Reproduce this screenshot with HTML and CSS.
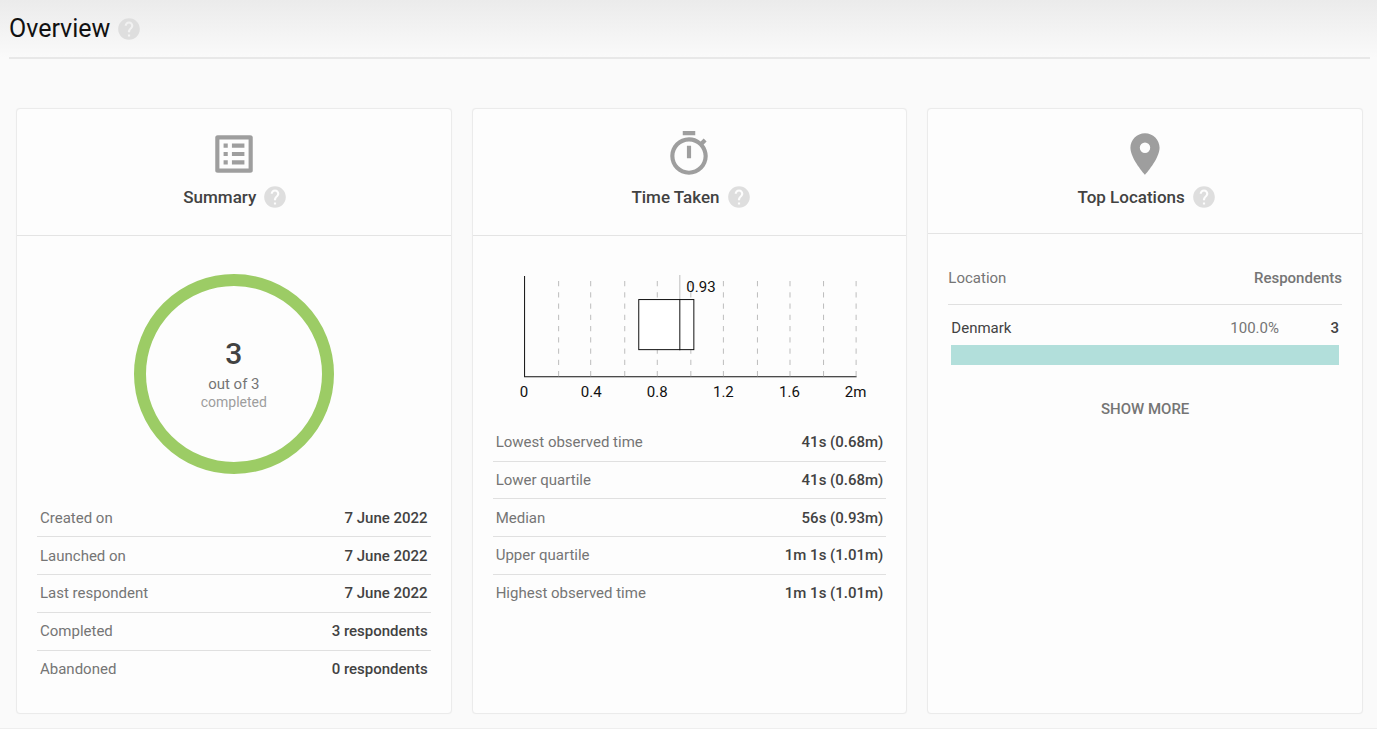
FILE: index.html
```html
<!DOCTYPE html>
<html lang="en">
<head>
<meta charset="utf-8">
<title>Overview</title>
<link rel="stylesheet" href="styles.css">
</head>
<body>
<svg class="defs" aria-hidden="true">
  <symbol id="help" viewBox="0 0 24 24"><path d="M12 2C6.48 2 2 6.48 2 12s4.48 10 10 10 10-4.480 10-10S17.520 2 12 2zm1 17h-2v-2h2v2zm2.070-7.750l-.9.920C13.450 12.900 13 13.500 13 15h-2v-.5c0-1.100.45-2.100 1.170-2.830l1.240-1.260c.37-.36.59-.86.59-1.410 0-1.100-.9-2-2-2s-2 .9-2 2H8c0-2.210 1.790-4 4-4s4 1.790 4 4c0 .88-.36 1.680-.93 2.250z"/></symbol>
</svg>
<main class="overview">
  <header class="page-head">
    <h1 class="page-title">Overview</h1>
    <button class="help" type="button" aria-label="Help: Overview"><svg class="help-icon"><use href="#help"/></svg></button>
  </header>
  <div class="cards">
    <section class="card">
      <header class="card-head">
        <svg class="card-icon" viewBox="0 0 24 24"><path d="M19 5v14H5V5h14m0-2H5c-1 0-2 0-2 1v16c0 1 1 1 2 1h14c1 0 2 0 2-1V4c0-1-1-1-2-1zM11 7h6v2h-6zm0 4h6v2h-6zm0 4h6v2h-6zM7 7h2v2H7zm0 4h2v2H7zm0 4h2v2H7z"/></svg>
        <div class="card-title"><h2>Summary</h2><button class="help" type="button" aria-label="Help: Summary"><svg class="help-icon"><use href="#help"/></svg></button></div>
      </header>
      <div class="card-body">
        <div class="donut">
          <strong class="donut-value">3</strong>
          <span class="donut-total">out of 3</span>
          <span class="donut-label">completed</span>
        </div>
        <table class="facts">
          <tr><th scope="row">Created on</th><td>7 June 2022</td></tr>
          <tr><th scope="row">Launched on</th><td>7 June 2022</td></tr>
          <tr><th scope="row">Last respondent</th><td>7 June 2022</td></tr>
          <tr><th scope="row">Completed</th><td>3 respondents</td></tr>
          <tr><th scope="row">Abandoned</th><td>0 respondents</td></tr>
        </table>
      </div>
    </section>
    <section class="card">
      <header class="card-head">
        <svg class="card-icon" viewBox="0 0 24 24"><path d="M15 1H9v2h6V1zm-4 13h2V8h-2v6zm8.030-6.610l1.420-1.420c-.43-.51-.9-.99-1.410-1.410l-1.420 1.420C16.070 4.740 14.120 4 12 4c-4.970 0-9 4.030-9 9s4.020 9 9 9 9-4.030 9-9c0-2.120-.74-4.070-1.970-5.610zM12 20c-3.870 0-7-3.130-7-7s3.130-7 7-7 7 3.130 7 7-3.130 7-7 7z"/></svg>
        <div class="card-title"><h2>Time Taken</h2><button class="help" type="button" aria-label="Help: Time Taken"><svg class="help-icon"><use href="#help"/></svg></button></div>
      </header>
      <div class="card-body">
        <svg class="boxplot" viewBox="0 0 393 136" role="img" aria-label="Box plot of time taken in minutes">
          <path class="axis" d="M31.500 10V110.500H363"/>
          <g class="grid">
            <path pathLength="93" d="M65.500 15V110"/><path pathLength="93" d="M97.500 15V110"/>
            <path pathLength="93" d="M131.500 15V110"/><path pathLength="93" d="M164 15V110"/>
            <path pathLength="93" d="M197.500 15V110"/><path pathLength="93" d="M230 15V110"/>
            <path pathLength="93" d="M264 15V110"/><path pathLength="93" d="M296.500 15V110"/>
            <path pathLength="93" d="M330 15V110"/><path pathLength="93" d="M362.500 15V110"/>
          </g>
          <rect class="box" x="145.500" y="33.500" width="55" height="50"/>
          <path class="whisker" d="M186.500 9V33"/>
          <path class="median" d="M186.500 33V84"/>
          <text x="193" y="26">0.93</text>
          <g class="ticks">
            <text x="31" y="131">0</text><text x="98" y="131">0.4</text><text x="164" y="131">0.8</text>
            <text x="230" y="131">1.2</text><text x="296" y="131">1.6</text><text x="362" y="131">2m</text>
          </g>
        </svg>
        <table class="facts">
          <tr><th scope="row">Lowest observed time</th><td>41s (0.68m)</td></tr>
          <tr><th scope="row">Lower quartile</th><td>41s (0.68m)</td></tr>
          <tr><th scope="row">Median</th><td>56s (0.93m)</td></tr>
          <tr><th scope="row">Upper quartile</th><td>1m 1s (1.01m)</td></tr>
          <tr><th scope="row">Highest observed time</th><td>1m 1s (1.01m)</td></tr>
        </table>
      </div>
    </section>
    <section class="card">
      <header class="card-head card-head-short">
        <svg class="card-icon" viewBox="0 0 24 24"><path d="M12 2C8.130 2 5 5.130 5 9c0 5.250 7 13 7 13s7-7.750 7-13c0-3.870-3.130-7-7-7zm0 9.500a2.500 2.500 0 0 1 0-5 2.500 2.500 0 0 1 0 5z"/></svg>
        <div class="card-title"><h2>Top Locations</h2><button class="help" type="button" aria-label="Help: Top Locations"><svg class="help-icon"><use href="#help"/></svg></button></div>
      </header>
      <div class="card-body locations-body">
        <table class="locations">
          <thead><tr><th scope="col">Location</th><th class="count-head" scope="col" colspan="2">Respondents</th></tr></thead>
          <tbody>
            <tr class="location-row"><td>Denmark</td><td class="percent">100.0%</td><td class="count">3</td></tr>
            <tr><td class="bar-cell" colspan="3"><div class="bar" style="width: 100%"></div></td></tr>
          </tbody>
        </table>
        <button class="show-more" type="button">SHOW MORE</button>
      </div>
    </section>
  </div>
</main>
</body>
</html>
```
FILE: styles.css
```css
* { box-sizing: border-box; }
body {
  margin: 0;
  background: #fff;
  color: #424242;
  font: 15px/20px Roboto, "Liberation Sans", sans-serif;
}
h1, h2 { margin: 0; }
button {
  padding: 0;
  border: 0;
  background: none;
  font: inherit;
  cursor: pointer;
}
.defs { position: absolute; width: 0; height: 0; }

.overview {
  margin-right: 4px;
  padding-bottom: 14px;
  border-bottom: 1px solid #eee;
  background: #fafafa linear-gradient(#ebebeb, #fafafa) no-repeat 0 0 / 100% 58px;
}
.page-head {
  display: flex;
  align-items: center;
  gap: 6px;
  height: 59px;
  margin: 0 7px 0 9px;
  border-bottom: 2px solid #e8e8e8;
}
.page-title {
  color: #111;
  font-size: 25px;
  font-weight: 400;
  line-height: 32px;
}
.help { display: flex; color: #dedede; }
.help-icon { width: 26px; height: 26px; fill: currentColor; }

.cards {
  display: grid;
  grid-template-columns: repeat(3, 1fr);
  gap: 20px;
  padding: 49px 14px 0 16px;
}
.card {
  border: 1px solid #ebebeb;
  border-radius: 4px;
  background: #fdfdfd;
  box-shadow: 0 0 1px #eee;
}
.card-head {
  display: flex;
  flex-direction: column;
  align-items: center;
  padding: 20px 0 25px;
  border-bottom: 1px solid #e4e4e4;
}
.card-head-short { padding-bottom: 23px; }
.card-icon { width: 50px; height: 50px; fill: #9e9e9e; }
.card-title {
  display: flex;
  align-items: center;
  gap: 6px;
  padding: 5px 0 0 4px;
}
.card-title h2 {
  font-size: 17px;
  font-weight: 500;
  line-height: 24px;
}
.card-body { padding: 30px 20px 26px; }

.donut {
  display: flex;
  flex-direction: column;
  align-items: center;
  justify-content: center;
  width: 200px;
  height: 200px;
  margin: 8px auto 26px;
  padding-bottom: 4px;
  border: 12px solid #9ccc65;
  border-radius: 50%;
}
.donut-value {
  font-size: 30px;
  font-weight: 500;
  line-height: 40px;
}
.donut-total { color: #757575; }
.donut-label { color: #9e9e9e; font-size: 14px; line-height: 16px; }

.facts {
  width: 100%;
  height: 187px;
  border-collapse: collapse;
}
.facts th, .facts td { padding: 0 3px; }
.facts tr + tr { border-top: 1px solid #e0e0e0; }
.facts th { color: #757575; font-weight: 400; text-align: left; }
.facts td { font-weight: 500; text-align: right; }

.boxplot {
  display: block;
  width: 100%;
  margin-bottom: 22px;
  font-size: 15px;
}
.axis, .grid, .box, .whisker, .median { fill: none; stroke-width: 1; }
.axis, .box, .median { stroke: #111; }
.box { fill: #fff; }
.grid { stroke: #bdbdbd; stroke-dasharray: 5 6; }
.whisker { stroke: #bdbdbd; }
.boxplot text { fill: #111; }
.ticks { text-anchor: middle; }

.locations-body {
  display: flex;
  flex-direction: column;
  align-items: center;
  gap: 34px;
}
.locations { width: 100%; border-collapse: collapse; }
.locations th {
  padding: 4px 0 16px;
  border-bottom: 1px solid #e0e0e0;
  color: #757575;
  font-weight: 400;
  text-align: left;
}
.locations .count-head { font-weight: 500; text-align: right; }
.locations td { padding: 0 3px; }
.location-row td { padding: 13px 3px 7px; }
.percent { color: #757575; text-align: right; }
.count { width: 60px; font-weight: 500; text-align: right; }
.bar { height: 20px; background: #b2dfdb; }
.show-more { color: #757575; font-weight: 500; }
```
